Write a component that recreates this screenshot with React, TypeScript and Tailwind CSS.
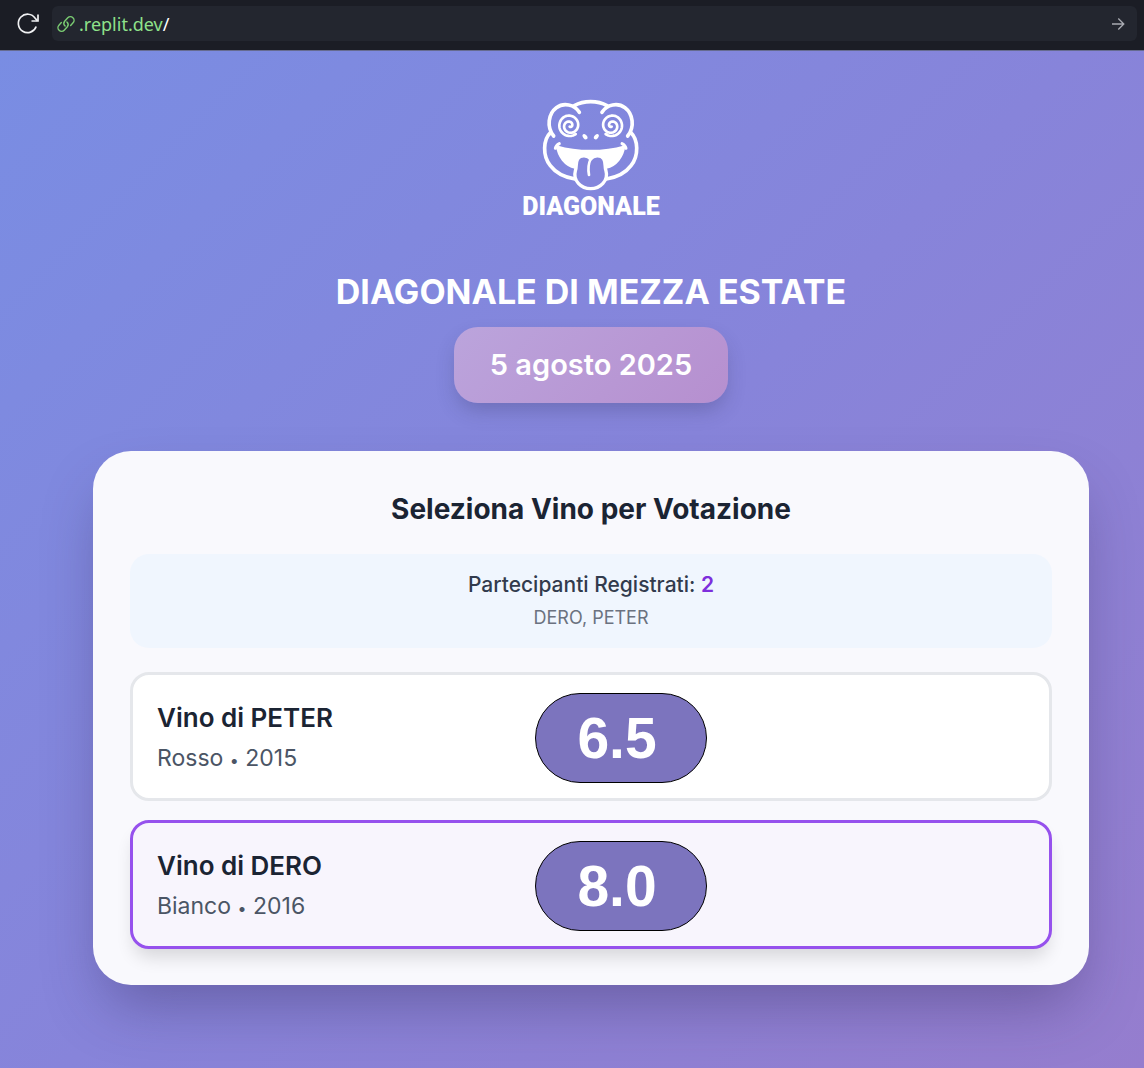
import { useState } from "react";

function spiral(cx: number, cy: number, dir: number) {
  const pts: string[] = [];
  const turns = 2.1;
  for (let i = 0; i <= 90; i++) {
    const t = i / 90;
    const a = Math.PI * 0.3 + (1 - t) * turns * Math.PI * 2;
    const r = 3 + 28 * Math.min(1, t * 1.35);
    pts.push(`${(cx + dir * r * Math.cos(a)).toFixed(1)} ${(cy + r * Math.sin(a)).toFixed(1)}`);
  }
  return "M" + pts.join("L");
}

function FrogLogo() {
  return (
    <svg
      viewBox="122 39 300 285"
      className="h-[95px] w-[100px]"
      fill="none"
      stroke="#fff"
      strokeWidth="11"
      strokeLinecap="round"
      strokeLinejoin="round"
      aria-hidden="true"
    >
      <path d="M222 62C250 46 292 46 320 62" />
      <path d="M237 82C222 58 190 52 168 68C144 86 138 126 160 153" />
      <path d="M305 82C320 58 352 52 374 68C398 86 404 126 382 153" />
      <path d="M151 142C128 164 126 212 150 242C168 266 198 278 224 282" />
      <path d="M391 142C414 164 416 212 392 242C374 266 344 278 318 282" />
      <path d={spiral(208, 122, 1)} strokeWidth="8" />
      <path d={spiral(334, 122, -1)} strokeWidth="8" />
      <ellipse cx="254" cy="155" rx="6" ry="9" transform="rotate(-38 254 155)" fill="#fff" stroke="none" />
      <ellipse cx="288" cy="155" rx="6" ry="9" transform="rotate(38 288 155)" fill="#fff" stroke="none" />
      <path
        d="M170 184C230 202 312 202 372 184C368 214 348 242 318 248L224 248C194 242 174 214 170 184Z"
        fill="#fff"
        strokeWidth="6"
      />
      <path d="M165 190Q167 181 177 176M377 190Q375 181 365 176" strokeWidth="9" />
      <path
        d="M271 222C263 210 240 208 232 222C225 234 230 246 225 258C217 286 242 311 271 311C300 311 325 286 317 258C312 246 317 234 310 222C302 208 279 210 271 222Z"
        fill="#8486dc"
        strokeWidth="10"
      />
      <path d="M271 222C264 236 263 254 266 270" strokeWidth="8" />
    </svg>
  );
}

const wines = [
  { name: "PETER", kind: "Rosso", year: 2015, score: "6.5" },
  { name: "DERO", kind: "Bianco", year: 2016, score: "8.0" },
];

function BrowserBar() {
  return (
    <header className="flex h-[51px] items-center gap-3 border-b border-[#666b90] bg-[#1b1d25] pr-[7px] pb-[3px] pl-4">
      <button type="button" aria-label="Ricarica" className="text-[#f0f1f3]">
        <svg viewBox="0 0 24 24" className="size-6" fill="none" stroke="currentColor" strokeWidth="1.7">
          <path d="M20.2 14.5A9.2 9.2 0 1 1 19.2 6.3L21.5 9" />
          <path d="M22 2.5V9H15.5" />
        </svg>
      </button>
      <div className="flex h-[35px] flex-1 items-center justify-between rounded-md bg-[#23262f] pr-3 pl-[5px]">
        <a href="#" className="flex items-center gap-1 font-['Noto_Sans',sans-serif] text-[18px] leading-6 text-[#8ee28a]">
          <svg viewBox="0 0 24 24" className="size-[18px]" fill="none" stroke="#7acb72" strokeWidth="1.9" strokeLinecap="round" aria-hidden="true">
            <path d="M10.8 14.8a4.8 4.8 0 0 1-.6-6.4l4.2-4.6a4.8 4.8 0 0 1 7 6.6l-3.2 3.5" />
            <path d="M13.2 9.2a4.8 4.8 0 0 1 .6 6.4l-4.2 4.6a4.8 4.8 0 0 1-7-6.6l3.2-3.5" />
          </svg>
          <span>
            .replit.dev<span className="text-white">/</span>
          </span>
        </a>
        <button type="button" aria-label="Vai" className="text-[#a9abb2]">
          <svg viewBox="0 0 14 14" className="size-3.5" fill="none" stroke="currentColor" strokeWidth="1.3">
            <path d="M1 7H12.5M7.3 1.5L12.8 7L7.3 12.5" />
          </svg>
        </button>
      </div>
    </header>
  );
}

export default function App() {
  const [selected, setSelected] = useState("DERO");
  return (
    <div className="flex min-h-screen flex-col font-['Inter',sans-serif]">
      <BrowserBar />
      <main className="flex flex-1 flex-col items-center bg-linear-135 from-[#798de3] via-[#8784da] to-[#957dce] pt-[47px] pr-[55px] pb-[84px] pl-[93px]">
        <div className="flex flex-col items-center">
          <FrogLogo />
          <span className="font-['Roboto',sans-serif] text-[25px] leading-7 font-black text-white">
            DIAGONALE
          </span>
        </div>
        <h1 className="mt-[49px] text-center text-[34px] leading-[44px] font-bold text-white">
          DIAGONALE DI MEZZA ESTATE
        </h1>
        <p className="mt-[13px] rounded-3xl bg-linear-135 from-[#bba4dc] to-[#b68fcf] px-9 py-[18px] text-[29px] leading-10 font-semibold text-white shadow-[0_10px_20px_-3px_rgba(50,50,90,0.28)]">
          5 agosto 2025
        </p>
        <section className="mt-12 w-full rounded-[38px] bg-[#f9f9fd] px-[37px] pt-[38px] pb-9 shadow-[0_30px_60px_-12px_rgba(50,40,90,0.4)]">
          <h2 className="text-center text-[28px] leading-10 font-bold text-[#1b2433]">
            Seleziona Vino per Votazione
          </h2>
          <div className="mt-[25px] rounded-[19px] bg-[#f0f6fe] py-4 text-center">
            <p className="text-[21px] leading-[30px] font-medium text-[#323b4d]">
              Partecipanti Registrati: <span className="font-semibold text-[#7e2fdc]">2</span>
            </p>
            <p className="mt-1 text-[18px] leading-7 text-[#6b7280]">DERO, PETER</p>
          </div>
          <div className="mt-6 flex flex-col gap-[19px]">
            {wines.map((w) => {
              const active = w.name === selected;
              return (
                <button
                  key={w.name}
                  type="button"
                  aria-pressed={active}
                  onClick={() => setSelected(w.name)}
                  className={
                    "flex h-[129px] items-center rounded-[19px] border-3 px-6 pt-[3px] text-left " +
                    (active
                      ? "border-[#9651ed] bg-[#f8f5fd] shadow-[0_12px_18px_-4px_rgba(0,0,0,0.14)]"
                      : "border-[#e5e7eb] bg-white")
                  }
                >
                  <span className="flex w-[378px] flex-col">
                    <span className="text-[26px] leading-9 font-semibold text-[#1b2433]">Vino di {w.name}</span>
                    <span className="mt-1 text-[23px] leading-9 text-[#4b5565]">
                      {w.kind} <span className="align-middle text-base leading-none">•</span> {w.year}
                    </span>
                  </span>
                  <span className="flex h-[90px] w-[172px] items-center justify-center rounded-full border border-black bg-[#7c74be] pr-2 font-['Liberation_Sans',sans-serif] text-[57px] leading-none font-bold text-white">
                    {w.score}
                  </span>
                </button>
              );
            })}
          </div>
        </section>
      </main>
    </div>
  );
}
